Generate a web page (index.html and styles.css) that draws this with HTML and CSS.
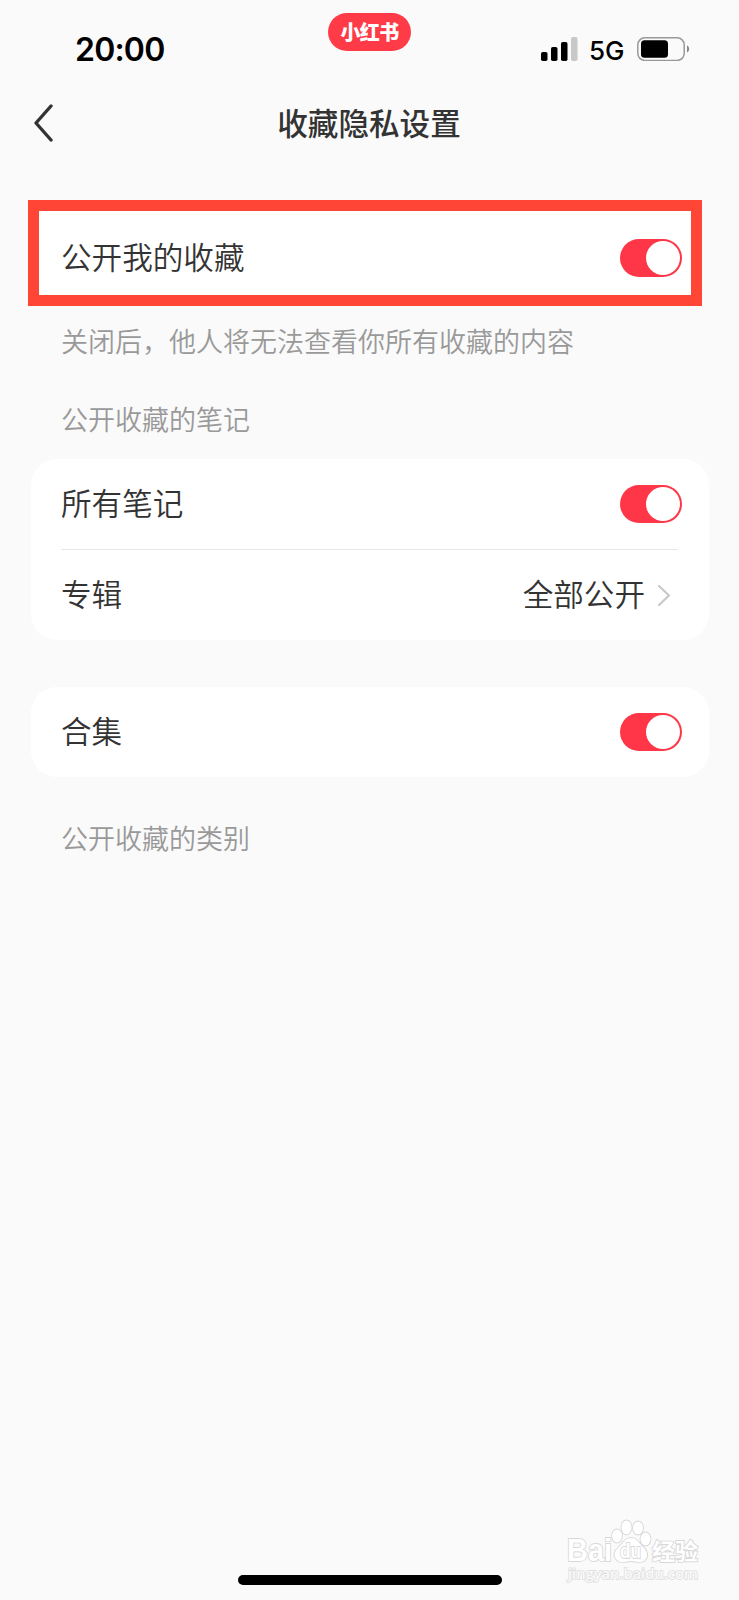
FILE: index.html
```html
<!DOCTYPE html>
<html lang="zh-CN">
<head>
    <meta charset="UTF-8">
    <title>收藏隐私设置</title>
    <link rel="stylesheet" href="styles.css">
</head>
<body>
<div class="status-bar">
    <span class="time">20:00</span>
    <span class="app-pill">小红书</span>
    <div class="status-icons">
        <svg class="signal" width="37" height="24" viewBox="0 0 37 24">
            <rect x="0" y="15" width="6.5" height="9" rx="1.8"/>
            <rect x="10" y="10" width="6.5" height="14" rx="1.8"/>
            <rect x="20" y="5" width="6.5" height="19" rx="1.8"/>
            <rect x="30" y="0" width="6.5" height="24" rx="1.8" fill="#c8c8c8"/>
        </svg>
        <span class="network">5G</span>
        <svg class="battery" width="53" height="24" viewBox="0 0 53 24">
            <rect x="0.8" y="0.8" width="46.4" height="22.6" rx="7" fill="none" stroke="#999" stroke-width="1.5"/>
            <rect x="4" y="3.3" width="27" height="17.4" rx="3.5"/>
            <path d="M50 8.3 Q52.2 9.6 52.2 12 Q52.2 14.4 50 15.7 Z" fill="#888"/>
        </svg>
    </div>
</div>

<div class="nav-bar">
    <svg class="back" width="20" height="38" viewBox="0 0 20 38">
        <path d="M18 2 L3 19 L18 36" fill="none" stroke="#333" stroke-width="3.4" stroke-linecap="round" stroke-linejoin="round"/>
    </svg>
    <h1>收藏隐私设置</h1>
</div>

<div class="highlight">
    <span class="label">公开我的收藏</span>
    <span class="toggle"></span>
</div>
<p class="hint">关闭后，他人将无法查看你所有收藏的内容</p>

<h2>公开收藏的笔记</h2>
<div class="card">
    <div class="row">
        <span class="label">所有笔记</span>
        <span class="toggle"></span>
    </div>
    <div class="divider"></div>
    <div class="row">
        <span class="label">专辑</span>
        <div class="value">
            <span class="label">全部公开</span>
            <svg width="14" height="22" viewBox="0 0 14 22">
                <path d="M2 2 L12 11.5 L2 21" fill="none" stroke="#c8c8c8" stroke-width="2.2" stroke-linecap="round" stroke-linejoin="round"/>
            </svg>
        </div>
    </div>
</div>

<div class="card single">
    <div class="row">
        <span class="label">合集</span>
        <span class="toggle"></span>
    </div>
</div>

<h2 class="category">公开收藏的类别</h2>

<svg class="watermark" width="140" height="70" viewBox="0 0 140 70">
    <g class="mark">
        <text class="brand" x="7" y="41" textLength="45" lengthAdjust="spacingAndGlyphs">Bai</text>
        <ellipse cx="57" cy="16" rx="5" ry="6.5"/>
        <ellipse cx="66.5" cy="7.5" rx="5" ry="7"/>
        <ellipse cx="78" cy="8" rx="5" ry="6.5"/>
        <ellipse cx="85.5" cy="19" rx="5" ry="6.5"/>
        <path d="M71 18 C65 18 63 23 59 27 C54 31 53 36 57 40 C61 44 66 41 71 41 C76 41 81 44 85 40 C89 36 87 31 83 27 C79 23 77 18 71 18 Z"/>
        <text class="du" x="60" y="38" textLength="21" lengthAdjust="spacingAndGlyphs">du</text>
        <text class="cn" x="92" y="40">经验</text>
    </g>
    <text class="url" x="8" y="59" textLength="130" lengthAdjust="spacingAndGlyphs">jingyan.baidu.com</text>
</svg>

<div class="home-indicator"></div>
</body>
</html>
```

FILE: styles.css
```css
* {
    box-sizing: border-box;
}

body {
    display: flex;
    flex-direction: column;
    height: 1600px;
    margin: 0;
    background-color: #fafafa;
    color: #333;
    font-family: "Noto Sans CJK SC", sans-serif;
    font-size: 30.6px;
    font-weight: 350;
    overflow: hidden;
}

.status-bar {
    display: grid;
    grid-template-columns: 328px 83px 1fr;
    height: 86px;
    padding-top: 13px;
    color: #000;
    font-family: Inter, sans-serif;
}

.time {
    padding: 17px 0 0 75px;
    font-size: 32px;
    font-weight: 600;
    letter-spacing: -0.8px;
    line-height: 40px;
}

.app-pill {
    height: 38px;
    border-radius: 19px;
    background-color: #ff3b48;
    color: white;
    font-family: "Noto Sans CJK SC", sans-serif;
    font-size: 20px;
    font-weight: 900;
    letter-spacing: -0.6px;
    line-height: 38px;
    text-align: center;
}

.status-icons {
    display: flex;
    align-items: center;
    height: 24px;
    margin: 24px 0 0 130px;
}

.network {
    width: 38px;
    margin: 3px 0 0 11px;
    font-size: 26px;
    font-weight: 500;
    line-height: 24px;
}

.battery {
    margin-left: 10px;
}

.nav-bar {
    display: grid;
    grid-template-columns: 100px 1fr 100px;
    align-items: center;
    height: 74px;
}

.back {
    margin-left: 33px;
}

h1 {
    margin: 0 1px 3px 0;
    font-size: 30.6px;
    font-weight: 500;
    line-height: 44px;
    text-align: center;
}

.highlight {
    display: flex;
    align-items: center;
    justify-content: space-between;
    width: 674px;
    height: 106px;
    margin: 40px 0 0 28px;
    padding: 10px 9px 0 22px;
    border: 11px solid #fe4536;
    background-color: white;
}

.label {
    margin-bottom: 4px;
    line-height: 44px;
}

.toggle {
    display: flex;
    justify-content: flex-end;
    width: 62px;
    height: 38px;
    padding: 2px;
    border-radius: 19px;
    background-color: #ff3648;
}

.toggle::after {
    content: "";
    width: 34px;
    height: 34px;
    border-radius: 50%;
    background-color: white;
}

.hint,
h2 {
    margin: 0 0 0 61px;
    color: #999;
    font-size: 27px;
    font-weight: 350;
    line-height: 40px;
}

.hint {
    margin-top: 15px;
}

h2 {
    margin-top: 38px;
}

.card {
    width: 678px;
    margin: 20px 0 0 31px;
    padding: 0 27px 0 30px;
    border-radius: 26px;
    background-color: white;
}

.row {
    display: flex;
    align-items: center;
    justify-content: space-between;
    height: 90px;
}

.divider {
    height: 1px;
    margin-right: 4px;
    background-color: #e6e6e6;
}

.value {
    display: flex;
    align-items: center;
    gap: 12px;
    margin-right: 11px;
}

.single {
    margin-top: 47px;
}

.category {
    margin-top: 41px;
}

.watermark {
    position: absolute;
    left: 560px;
    top: 1520px;
    font-family: "Open Sans", sans-serif;
    overflow: visible;
}

.mark {
    fill: white;
    stroke: #d8d8d8;
    stroke-width: 1.8px;
    paint-order: stroke;
}

.brand {
    font-family: "Liberation Sans", sans-serif;
    font-size: 31px;
    font-weight: 700;
}

.du {
    font-family: "Liberation Sans", sans-serif;
    font-size: 21px;
    font-weight: 700;
}

.cn {
    font-family: "Noto Sans CJK SC", sans-serif;
    font-size: 23px;
    font-weight: 700;
}

.url {
    fill: #fafafa;
    stroke: #dcdcdc;
    stroke-width: 1.5px;
    paint-order: stroke;
    font-size: 15px;
    font-weight: 600;
}

.home-indicator {
    width: 264px;
    height: 10px;
    margin: auto 0 15px 238px;
    border-radius: 5px;
    background-color: #000;
}
```
